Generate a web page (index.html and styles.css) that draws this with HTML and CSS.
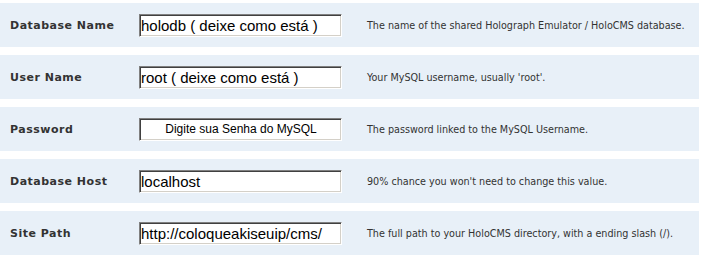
FILE: index.html
```html
<!DOCTYPE html>
<html>
<head>
<meta charset="utf-8">
<link rel="stylesheet" href="styles.css">
</head>
<body>
<div class="form">
  <div class="row">
    <div class="label">Database Name</div>
    <input class="field" type="text" value="holodb ( deixe como está )">
    <div class="desc">The name of the shared Holograph Emulator / HoloCMS database.</div>
  </div>
  <div class="row">
    <div class="label">User Name</div>
    <input class="field" type="text" value="root ( deixe como está )">
    <div class="desc">Your MySQL username, usually 'root'.</div>
  </div>
  <div class="row">
    <div class="label">Password</div>
    <input class="field field-center" type="text" value="Digite sua Senha do MySQL">
    <div class="desc">The password linked to the MySQL Username.</div>
  </div>
  <div class="row">
    <div class="label">Database Host</div>
    <input class="field" type="text" value="localhost">
    <div class="desc">90% chance you won't need to change this value.</div>
  </div>
  <div class="row">
    <div class="label">Site Path</div>
    <input class="field" type="text" value="http://coloqueakiseuip/cms/">
    <div class="desc">The full path to your HoloCMS directory, with a ending slash (/).</div>
  </div>
</div>
</body>
</html>
```
FILE: styles.css
```css
html, body {
  margin: 0;
  padding: 0;
  background: #ffffff;
}
.form {
  padding-top: 3px;
  width: 699px;
  display: flex;
  flex-direction: column;
  gap: 8px;
}
.row {
  height: 44px;
  background: #e8f0f8;
  display: flex;
  align-items: center;
}
.label {
  width: 129px;
  padding-left: 10px;
  font-family: "DejaVu Sans", Verdana, sans-serif;
  font-weight: bold;
  font-size: 11px;
  letter-spacing: 0.5px;
  color: #333333;
}
.field {
  box-sizing: border-box;
  width: 203px;
  height: 23px;
  margin: 0;
  padding: 0 0 0 1px;
  border: 1px solid;
  border-color: #808080 #ffffff #ffffff #808080;
  box-shadow: inset 1px 1px 0 #404040, inset -1px -1px 0 #d4d0c8;
  background: #ffffff;
  font-family: "Liberation Sans", Arial, sans-serif;
  font-size: 15px;
  color: #000000;
  outline: none;
}
.field-center {
  text-align: center;
  font-size: 12px;
}
.desc {
  margin-left: 25px;
  font-family: "DejaVu Sans Condensed", "DejaVu Sans", sans-serif;
  font-size: 10.7px;
  color: #333333;
}
```
